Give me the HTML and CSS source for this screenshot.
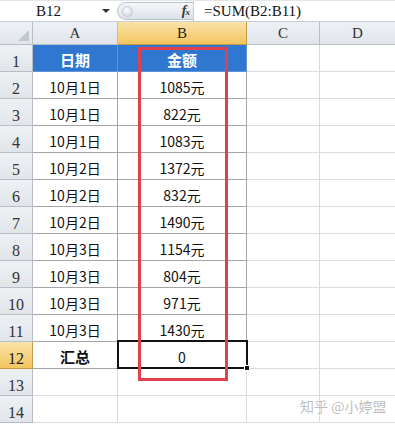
FILE: index.html
```html
<!DOCTYPE html>
<html lang="zh-CN">
<head>
    <meta charset="UTF-8">
    <title>汇总</title>
    <link rel="stylesheet" href="styles.css">
</head>
<body>
<div class="fbar">
    <div class="namebox">
        <span class="ref">B12</span>
        <span class="drop"></span>
    </div>
    <div class="pill">
        <span class="knob"></span>
        <span class="fx"><i>f</i><small>x</small></span>
    </div>
    <div class="formula">=SUM(B2:B11)</div>
</div>

<div class="sheet">
    <div class="corner"><span class="tri"></span></div>
    <div class="ch">A</div>
    <div class="ch sel">B</div>
    <div class="ch">C</div>
    <div class="ch">D</div>

    <div class="rh">1</div>
    <div class="c t head">日期</div>
    <div class="c t head">金额</div>
    <div class="c"></div><div class="c"></div>

    <div class="rh">2</div>
    <div class="c t">10月1日</div><div class="c t">1085元</div>
    <div class="c"></div><div class="c"></div>

    <div class="rh">3</div>
    <div class="c t">10月1日</div><div class="c t">822元</div>
    <div class="c"></div><div class="c"></div>

    <div class="rh">4</div>
    <div class="c t">10月1日</div><div class="c t">1083元</div>
    <div class="c"></div><div class="c"></div>

    <div class="rh">5</div>
    <div class="c t">10月2日</div><div class="c t">1372元</div>
    <div class="c"></div><div class="c"></div>

    <div class="rh">6</div>
    <div class="c t">10月2日</div><div class="c t">832元</div>
    <div class="c"></div><div class="c"></div>

    <div class="rh">7</div>
    <div class="c t">10月2日</div><div class="c t">1490元</div>
    <div class="c"></div><div class="c"></div>

    <div class="rh">8</div>
    <div class="c t">10月3日</div><div class="c t">1154元</div>
    <div class="c"></div><div class="c"></div>

    <div class="rh">9</div>
    <div class="c t">10月3日</div><div class="c t">804元</div>
    <div class="c"></div><div class="c"></div>

    <div class="rh">10</div>
    <div class="c t">10月3日</div><div class="c t">971元</div>
    <div class="c"></div><div class="c"></div>

    <div class="rh">11</div>
    <div class="c t">10月3日</div><div class="c t">1430元</div>
    <div class="c"></div><div class="c"></div>

    <div class="rh sel">12</div>
    <div class="c t total">汇总</div><div class="c t">0</div>
    <div class="c"></div><div class="c"></div>

    <div class="rh">13</div>
    <div class="c"></div><div class="c"></div><div class="c"></div><div class="c"></div>

    <div class="rh">14</div>
    <div class="c"></div><div class="c"></div><div class="c"></div><div class="c"></div>

    <!-- overlays -->
    <div class="active"><span class="handle"></span></div>
    <div class="mark"></div>
    <div class="watermark">知乎 @小婷盟</div>
</div>
</body>
</html>
```

FILE: styles.css
```css
*{
    box-sizing: border-box;
}
body{
    margin: 0;
    width: 395px;
    height: 427px;
    overflow: hidden;
    background: #fff;
    font-family: "Noto Sans CJK SC", sans-serif;
}

/* formula bar */
.fbar{
    display: flex;
    height: 22px;
    border-top: 1px solid #e2e5e9;
    border-bottom: 1px solid #c9ced5;
    background: #fff;
}
.namebox{
    width: 117px;
    display: flex;
    align-items: center;
    padding-left: 36px;
    font-family: "Liberation Serif", serif;
    font-size: 15px;
    color: #111;
}
.namebox .drop{
    margin-left: auto;
    margin-right: 7px;
    width: 0;
    height: 0;
    border-left: 4px solid transparent;
    border-right: 4px solid transparent;
    border-top: 4px solid #333;
}
.pill{
    width: 76px;
    margin: 1px 0;
    display: flex;
    align-items: center;
    justify-content: space-between;
    padding: 0 4px 0 4px;
    border: 1px solid #b9c3ce;
    border-right: none;
    border-radius: 10px 0 0 10px;
    background: linear-gradient(#f4f6f8, #dde2e8);
}
.knob{
    width: 11px;
    height: 11px;
    border-radius: 50%;
    background: radial-gradient(circle at 40% 35%, #fff, #c8ced6);
    border: 1px solid #c5ccd4;
}
.fx{
    font-family: "Liberation Serif", serif;
    font-weight: 700;
    font-size: 14px;
    color: #3a3a3a;
    letter-spacing: -1px;
}
.fx small{
    font-size: 9px;
    font-style: italic;
}
.formula{
    flex: 1;
    display: flex;
    align-items: center;
    padding-left: 10px;
    border-left: 1px solid #c9ced5;
    font-family: "Liberation Serif", serif;
    font-size: 15px;
    color: #111;
}

/* grid */
.sheet{
    position: relative;
    display: grid;
    grid-template-columns: 33px 85px 129px 73px 76px;
    grid-template-rows: 23px;
    grid-auto-rows: 27px;
}
.corner, .ch, .rh{
    background: linear-gradient(#eef1f4, #e1e5ea);
    border-right: 1px solid #b6bec8;
    border-bottom: 1px solid #b6bec8;
    font-family: "Liberation Serif", serif;
    font-size: 15px;
    color: #333;
    display: flex;
    justify-content: center;
}
.corner{
    position: relative;
}
.tri{
    position: absolute;
    right: 3px;
    bottom: 3px;
    width: 0;
    height: 0;
    border-left: 11px solid transparent;
    border-bottom: 11px solid #c2c8d0;
}
.ch{
    align-items: center;
    padding-top: 1px;
}
.rh{
    align-items: flex-end;
    padding-bottom: 0;
    font-size: 16px;
}
.ch.sel, .rh.sel{
    background: linear-gradient(#fae3a8, #f3c560);
    border-color: #c29b49;
    color: #222;
}
.c{
    border-right: 1px solid #d9dbde;
    border-bottom: 1px solid #d9dbde;
    display: flex;
    align-items: flex-end;
    justify-content: center;
    padding-bottom: 1px;
    font-size: 14px;
    color: #111;
}
.t{
    border-color: #a5a5a5;
}
.head{
    background: #2f77d1;
    color: #fff;
    font-weight: 700;
    font-size: 15px;
    padding-bottom: 1px;
    border-color: #5f95d6;
}
.total{
    font-weight: 700;
    font-size: 15px;
}

/* overlays */
.active{
    position: absolute;
    left: 117px;
    top: 318px;
    width: 131px;
    height: 29px;
    border: 2px solid #111;
}
.handle{
    position: absolute;
    right: -4px;
    bottom: -4px;
    width: 6px;
    height: 6px;
    background: #111;
    border: 1px solid #fff;
}
.mark{
    position: absolute;
    left: 138px;
    top: 25px;
    width: 90px;
    height: 334px;
    border: 3px solid #e2404c;
}
.watermark{
    position: absolute;
    left: 300px;
    top: 374px;
    font-size: 14px;
    color: rgba(170, 170, 170, 0.75);
    white-space: nowrap;
}
```
